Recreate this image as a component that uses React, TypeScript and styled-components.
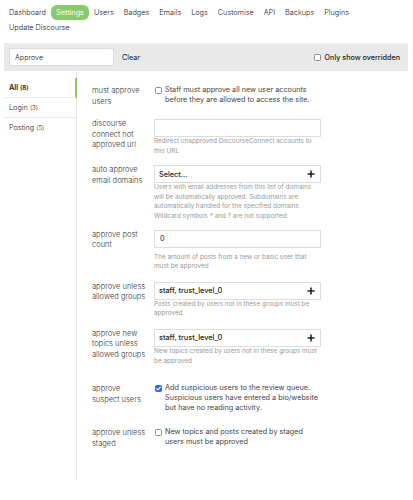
import React from 'react';
import styled, { createGlobalStyle } from 'styled-components';

const font = '"Inter", "Liberation Sans", Arial, sans-serif';

const GlobalStyle = createGlobalStyle`
  html, body {
    margin: 0;
    padding: 0;
    background: #fff;
  }
  body {
    font-family: ${font};
    color: #222;
  }
`;

const Page = styled.div`
  width: 413px;
  box-sizing: border-box;
  padding: 0 5px 0 4px;
`;

const Nav = styled.ul`
  display: flex;
  flex-wrap: wrap;
  list-style: none;
  margin: 0;
  padding: 5px 0 0;
`;

const NavItem = styled.li<{ $active?: boolean }>`
  height: 15px;
  line-height: 15px;
  padding: 0 5px;
  font-size: 7.3px;
  font-weight: ${(p) => (p.$active ? 400 : 300)};
  border-radius: 6px;
  background: ${(p) => (p.$active ? '#88c96b' : 'transparent')};
  color: ${(p) => (p.$active ? '#fff' : '#222')};
`;

const FilterBar = styled.div`
  display: flex;
  align-items: center;
  height: 28px;
  margin-top: 8px;
  padding: 0 8px 0 5px;
  background: #e9e9e9;
`;

const SearchInput = styled.input`
  box-sizing: border-box;
  width: 105px;
  height: 18px;
  margin: 0;
  padding: 0 5px;
  border: 1px solid #dcdcdc;
  background: #fff;
  font: 300 7.2px ${font};
  color: #222;
  outline: none;
`;

const ClearButton = styled.button`
  margin-left: 8px;
  padding: 0;
  border: none;
  background: transparent;
  font: 400 7.2px ${font};
  color: #222;
`;

const Spacer = styled.div`
  flex: 1;
`;

const OverriddenToggle = styled.label`
  display: flex;
  align-items: center;
  gap: 4px;
  font-size: 7.2px;
  font-weight: 500;
  color: #222;
`;

const Mark = styled.span<{ $checked?: boolean }>`
  box-sizing: border-box;
  display: inline-flex;
  align-items: center;
  justify-content: center;
  flex: none;
  width: 7px;
  height: 7px;
  border-radius: 1.5px;
  border: 1px solid ${(p) => (p.$checked ? '#2a6cf0' : '#8a8a8a')};
  background: ${(p) => (p.$checked ? '#2a6cf0' : '#fff')};
`;

const Body = styled.div`
  display: flex;
`;

const Sidebar = styled.ul`
  width: 72px;
  flex: none;
  list-style: none;
  margin: 0;
  padding: 7px 0 0;
  border-right: 1px solid #e6e6e6;
`;

const SideItem = styled.li<{ $active?: boolean }>`
  height: 19px;
  line-height: 19px;
  padding-left: 5px;
  font-size: 7.3px;
  font-weight: ${(p) => (p.$active ? 600 : 300)};
  color: #222;
  margin-right: ${(p) => (p.$active ? '-1px' : '0')};
  border-right: ${(p) => (p.$active ? '2px solid #88c96b' : 'none')};
  &:not(:last-child) {
    border-bottom: 1px solid #e9e9e9;
  }
`;

const Count = styled.span`
  font-size: 6.2px;
`;

const Content = styled.div`
  flex: 1;
  padding: 15px 0 30px 15px;
`;

const Row = styled.div<{ $gap: number }>`
  display: grid;
  grid-template-columns: 62px 167px;
  margin-top: ${(p) => p.$gap}px;
`;

const Label = styled.div`
  padding-right: 5px;
  font-size: 7.5px;
  font-weight: 300;
  line-height: 10.5px;
  color: #333;
`;

const Controls = styled.div`
  display: flex;
  flex-direction: column;
`;

const TextInput = styled.input`
  box-sizing: border-box;
  width: 167px;
  height: 18px;
  margin: 0;
  padding: 0 5px;
  border: 1px solid #dcdcdc;
  background: #fff;
  font: 400 7.3px ${font};
  color: #222;
  outline: none;
`;

const ListBox = styled.div`
  box-sizing: border-box;
  display: flex;
  align-items: center;
  justify-content: space-between;
  width: 167px;
  height: 18px;
  padding: 0 5px 0 4px;
  border: 1px solid #dcdcdc;
  background: #fff;
  font-size: 7.3px;
  font-weight: 500;
  color: #222;
`;

const Help = styled.div<{ $offset?: number }>`
  margin-top: ${(p) => p.$offset ?? 0}px;
  font-size: 6.4px;
  line-height: 9.6px;
  color: #999;
`;

const CheckLine = styled.label`
  display: flex;
  align-items: flex-start;
  gap: 3px;
  padding-left: 1px;
  margin-top: -1px;
  & > span:first-child {
    margin-top: 2px;
  }
`;

const CheckText = styled.span`
  font-size: 7.25px;
  line-height: 9.7px;
  color: #444;
`;

const Checkbox: React.FC<{ checked?: boolean }> = ({ checked }) => (
  <Mark $checked={checked}>
    {checked && (
      <svg width="5" height="5" viewBox="0 0 5 5">
        <path d="M0.7 2.6L2 3.9L4.3 1.1" stroke="#fff" strokeWidth="1.1" fill="none" strokeLinecap="round" strokeLinejoin="round" />
      </svg>
    )}
  </Mark>
);

const PlusIcon = () => (
  <svg width="8" height="8" viewBox="0 0 8 8">
    <path d="M4 0.5v7M0.5 4h7" stroke="#222" strokeWidth="1.6" fill="none" />
  </svg>
);

type Setting = {
  label: string
  kind: 'checkbox' | 'text' | 'list'
  value?: string
  checked?: boolean
  text: string
  gap: number
  helpOffset?: number
};

const navItems = ['Dashboard', 'Settings', 'Users', 'Badges', 'Emails', 'Logs', 'Customise', 'API', 'Backups', 'Plugins', 'Update Discourse'];

const categories = [
  { name: 'All', count: 8 },
  { name: 'Login', count: 3 },
  { name: 'Posting', count: 5 },
];

const settings: Setting[] = [
  { label: 'must approve users', kind: 'checkbox', text: 'Staff must approve all new user accounts before they are allowed to access the site.', gap: 0 },
  { label: 'discourse connect not approved url', kind: 'text', value: '', text: 'Redirect unapproved DiscourseConnect accounts to this URL', gap: 12 },
  { label: 'auto approve email domains', kind: 'list', value: 'Select...', text: 'Users with email addresses from this list of domains will be automatically approved. Subdomains are automatically handled for the specified domains. Wildcard symbols * and ? are not supported.', gap: 9 },
  { label: 'approve post count', kind: 'text', value: '0', text: 'The amount of posts from a new or basic user that must be approved', gap: 8, helpOffset: 5 },
  { label: 'approve unless allowed groups', kind: 'list', value: 'staff, trust_level_0', text: 'Posts created by users not in these groups must be approved', gap: 10 },
  { label: 'approve new topics unless allowed groups', kind: 'list', value: 'staff, trust_level_0', text: 'New topics created by users not in these groups must be approved', gap: 10 },
  { label: 'approve suspect users', kind: 'checkbox', checked: true, text: 'Add suspicious users to the review queue. Suspicious users have entered a bio/website but have no reading activity.', gap: 18 },
  { label: 'approve unless staged', kind: 'checkbox', text: 'New topics and posts created by staged users must be approved', gap: 16 },
];

const SettingRow: React.FC<{ setting: Setting }> = ({ setting }) => {
  const { label, kind, value, checked, text, gap, helpOffset } = setting;

  let control = null;
  switch (kind) {
    case 'checkbox':
      control = (
        <CheckLine>
          <Checkbox checked={checked} />
          <CheckText>{text}</CheckText>
        </CheckLine>
      );
      break;
    case 'text':
      control = (
        <>
          <TextInput defaultValue={value} />
          <Help $offset={helpOffset}>{text}</Help>
        </>
      );
      break;
    case 'list':
      control = (
        <>
          <ListBox>
            <span>{value}</span>
            <PlusIcon />
          </ListBox>
          <Help $offset={helpOffset}>{text}</Help>
        </>
      );
      break;
    default:
      break;
  }

  return (
    <Row $gap={gap}>
      <Label>{label}</Label>
      <Controls>{control}</Controls>
    </Row>
  );
};

export default function App() {
  return (
    <Page>
      <GlobalStyle />
      <Nav>
        {navItems.map((item) => (
          <NavItem key={item} $active={item === 'Settings'}>{item}</NavItem>
        ))}
      </Nav>
      <FilterBar>
        <SearchInput defaultValue="Approve" />
        <ClearButton>Clear</ClearButton>
        <Spacer />
        <OverriddenToggle>
          <Checkbox />
          Only show overridden
        </OverriddenToggle>
      </FilterBar>
      <Body>
        <Sidebar>
          {categories.map((c, i) => (
            <SideItem key={c.name} $active={i === 0}>
              {c.name} <Count>({c.count})</Count>
            </SideItem>
          ))}
        </Sidebar>
        <Content>
          {settings.map((s) => (
            <SettingRow key={s.label} setting={s} />
          ))}
        </Content>
      </Body>
    </Page>
  );
}
